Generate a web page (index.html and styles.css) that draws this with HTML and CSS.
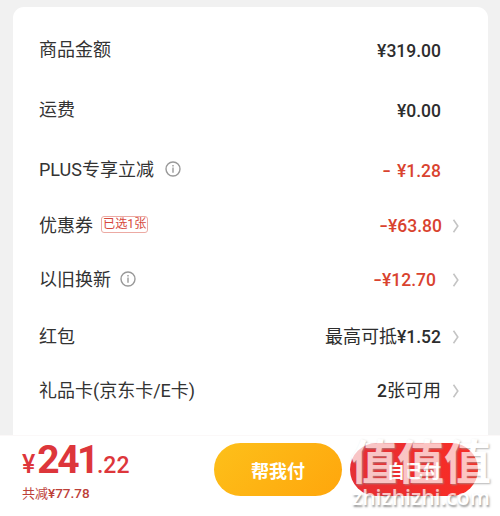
FILE: index.html
```html
<!doctype html>
<html lang="zh-CN">
    <head>
        <title>确认订单</title>
        <meta charset="UTF-8"/>
        <meta name="viewport" content="width=device-width, initial-scale=1"/>
        <link rel="stylesheet" href="styles.css">
    </head>
    <body>
        <div class="page">
            <div class="card">
                <div class="row row-goods">
                    <span class="label">商品金额</span>
                    <span class="amount">¥319.00</span>
                </div>
                <div class="row row-freight">
                    <span class="label">运费</span>
                    <span class="amount">¥0.00</span>
                </div>
                <div class="row row-plus">
                    <span class="label">PLUS专享立减</span>
                    <svg class="info" viewBox="0 0 16 16"><circle cx="8" cy="8" r="7"/><path d="M8 4v1.6M7.400 7.200H8v4.600"/></svg>
                    <span class="amount minus"><span class="dash">-</span> ¥1.28</span>
                </div>
                <div class="row row-coupon">
                    <span class="label">优惠券</span>
                    <span class="tag">已选1张</span>
                    <span class="amount minus"><span class="dash">-</span>¥63.80</span>
                    <svg class="arrow" viewBox="0 0 8 14"><path d="M1.500 .8L5.800 7L1.500 13.200"/></svg>
                </div>
                <div class="row row-trade">
                    <span class="label">以旧换新</span>
                    <svg class="info" viewBox="0 0 16 16"><circle cx="8" cy="8" r="7"/><path d="M8 4v1.6M7.400 7.200H8v4.600"/></svg>
                    <span class="amount minus"><span class="dash">-</span>¥12.70</span>
                    <svg class="arrow" viewBox="0 0 8 14"><path d="M1.500 .8L5.800 7L1.500 13.200"/></svg>
                </div>
                <div class="row row-packet">
                    <span class="label">红包</span>
                    <span class="amount"><span class="words">最高可抵</span>¥1.52</span>
                    <svg class="arrow" viewBox="0 0 8 14"><path d="M1.500 .8L5.800 7L1.500 13.200"/></svg>
                </div>
                <div class="row row-gift">
                    <span class="label">礼品卡(京东卡/E卡)</span>
                    <span class="amount">2<span class="words">张可用</span></span>
                    <svg class="arrow" viewBox="0 0 8 14"><path d="M1.500 .8L5.800 7L1.500 13.200"/></svg>
                </div>
            </div>
            <div class="pay-bar">
                <div class="total">
                    <div class="price"><span class="yen">¥</span><span class="yuan">241</span><span class="cents">.22</span></div>
                    <div class="saved">共减<span class="saved-amount">¥77.78</span></div>
                </div>
                <button class="button button-friend">帮我付</button>
                <button class="button button-self">自己付</button>
            </div>
            <div class="watermark">
                <div class="mark-logo">值值值</div>
                <div class="mark-site">zhizhizhi.com</div>
            </div>
        </div>
    </body>
</html>
```

FILE: styles.css
```css
body {
    margin: 0;
    background-color: #f1f1f1;
    font-family: Roboto, "Noto Sans CJK SC", sans-serif;
    color: #333333;
}
.page {
    position: relative;
    width: 500px;
    height: 516px;
    overflow: hidden;
}
.card {
    box-sizing: border-box;
    height: 428px;
    margin: 7px 12px 0 13px;
    padding: 13px 27px 0 26px;
    border-radius: 11px 11px 0 0;
    background-color: #ffffff;
}
.row {
    display: flex;
    align-items: center;
}
.row-goods,
.row-freight {
    height: 60px;
}
.row-plus {
    height: 59px;
}
.row-coupon {
    height: 53px;
}
.row-trade {
    height: 56px;
}
.row-packet {
    height: 57px;
}
.row-gift {
    height: 52px;
}
.label {
    font-size: 18px;
    line-height: 24px;
}
.info {
    width: 16px;
    height: 16px;
    margin: -2px 0 0 11px;
    fill: none;
    stroke: #999999;
    stroke-width: 1.4;
}
.row-trade .info {
    margin-left: 9px;
}
.tag {
    margin: -3px 0 0 8px;
    padding: 0 1px;
    border: 1px solid #ecaaa3;
    border-radius: 3px;
    font-size: 12.2px;
    line-height: 15px;
    color: #d6493d;
}
.amount {
    margin-left: auto;
    margin-right: 20px;
    padding-top: 2px;
    font-size: 17.5px;
    font-weight: 500;
    line-height: 24px;
    color: #2d2d2d;
}
.row-coupon .amount,
.row-trade .amount,
.row-packet .amount,
.row-gift .amount {
    padding-top: 0;
}
.row-coupon .amount {
    margin-right: 19px;
}
.row-trade .amount {
    margin-right: 25px;
}
.minus {
    color: #d9432f;
}
.dash {
    display: inline-block;
    transform: scaleX(1.4);
    transform-origin: right;
}
.row-plus .dash {
    margin-right: 2px;
}
.words {
    font-size: 18px;
    font-weight: 400;
}
.arrow {
    width: 8px;
    height: 14px;
    margin-left: -9px;
    margin-right: 1px;
    fill: none;
    stroke: #c4c4c4;
    stroke-width: 1.6;
}
.pay-bar {
    box-sizing: border-box;
    display: flex;
    height: 81px;
    padding: 7px 0 0 22px;
    border-top: 1px solid #fbf8f8;
    background-color: #ffffff;
}
.total {
    width: 192px;
    color: #dd363b;
}
.price {
    height: 41px;
    font-weight: 500;
    line-height: 35px;
    white-space: nowrap;
}
.yen {
    margin-right: 2px;
    font-size: 25px;
}
.yuan {
    font-size: 39px;
    font-weight: 700;
    letter-spacing: -2.5px;
}
.cents {
    font-size: 23px;
}
.saved {
    font-size: 13px;
    line-height: 18px;
    color: #bd4038;
}
.saved-amount {
    font-size: 13.5px;
    font-weight: 500;
}
.button {
    height: 53px;
    padding: 0;
    border: 0;
    border-radius: 27px;
    font-family: "Noto Sans CJK SC", sans-serif;
    font-size: 18px;
    font-weight: 700;
    color: #ffffff;
}
.button-friend {
    width: 128px;
    background: linear-gradient(135deg, #fdc01a, #ffa60c);
}
.button-self {
    width: 128px;
    margin-left: 8px;
    background: linear-gradient(90deg, #e62f35, #fa2c23);
}
/* group opacity keeps the shadow from showing through the letters */
.watermark {
    position: absolute;
    top: 434px;
    left: 350px;
    color: #ffffff;
    text-shadow: 1px 1px 2px #999999;
    white-space: nowrap;
    opacity: 0.72;
}
.mark-logo {
    height: 51px;
    font-family: "Noto Sans CJK SC", sans-serif;
    font-size: 47px;
    font-weight: 700;
    line-height: 50px;
}
.mark-site {
    padding-left: 2px;
    font-family: "Open Sans", sans-serif;
    font-size: 21.2px;
    font-weight: 600;
    line-height: 24px;
    text-shadow: 1px 2px 2px #777777;
}
```
